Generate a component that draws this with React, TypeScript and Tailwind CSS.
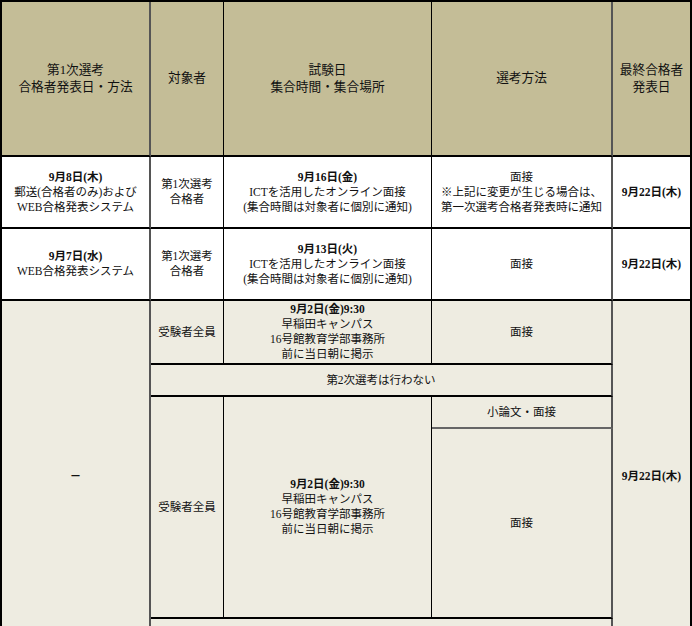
const font = {
  fontFamily: '"Liberation Serif", "Noto Sans CJK JP", serif',
};

function Cell({
  className = "",
  children,
}: {
  className?: string;
  children?: React.ReactNode;
}) {
  return (
    <div
      className={
        "flex flex-col items-center justify-center text-center text-[#111] " +
        className
      }
    >
      {children}
    </div>
  );
}

export default function App() {
  const head = "bg-[#c4bd97] border-b-2 border-b-black text-[12.7px] leading-[16.7px]";
  const body = "text-[11.5px] leading-[15px]";
  const rowLine = "border-b-2 border-b-black";

  return (
    <div className="min-h-screen bg-white" style={font}>
      <div className="grid w-[692px] grid-cols-[149px_73px_208px_181px_77px] grid-rows-[155px_72px_72px_64px_32px_32px_190px_32px] border-l-2 border-t-2 border-r-2 border-black">
        {/* header */}
        <Cell className={`${head} border-r-2 border-r-[#555]`}>
          <span>第1次選考</span>
          <span>合格者発表日・方法</span>
        </Cell>
        <Cell className={`${head} border-r border-r-black`}>
          <span>対象者</span>
        </Cell>
        <Cell className={`${head} border-r border-r-black`}>
          <span>試験日</span>
          <span>集合時間・集合場所</span>
        </Cell>
        <Cell className={`${head} border-r-2 border-r-[#555]`}>
          <span>選考方法</span>
        </Cell>
        <Cell className={head}>
          <span>最終合格者</span>
          <span>発表日</span>
        </Cell>

        {/* row 1 */}
        <Cell className={`${body} ${rowLine} bg-white border-r-2 border-r-[#555]`}>
          <span className="font-bold">9月8日(木)</span>
          <span>郵送(合格者のみ)および</span>
          <span>WEB合格発表システム</span>
        </Cell>
        <Cell className={`${body} ${rowLine} bg-white border-r border-r-black`}>
          <span>第1次選考</span>
          <span>合格者</span>
        </Cell>
        <Cell className={`${body} ${rowLine} bg-white border-r border-r-black`}>
          <span className="font-bold">9月16日(金)</span>
          <span>ICTを活用したオンライン面接</span>
          <span>(集合時間は対象者に個別に通知)</span>
        </Cell>
        <Cell className={`${body} ${rowLine} bg-white border-r-2 border-r-[#555]`}>
          <span>面接</span>
          <span>※上記に変更が生じる場合は、</span>
          <span>第一次選考合格者発表時に通知</span>
        </Cell>
        <Cell className={`${body} ${rowLine} bg-white`}>
          <span className="font-bold">9月22日(木)</span>
        </Cell>

        {/* row 2 */}
        <Cell className={`${body} ${rowLine} bg-white border-r-2 border-r-[#555]`}>
          <span className="font-bold">9月7日(水)</span>
          <span>WEB合格発表システム</span>
        </Cell>
        <Cell className={`${body} ${rowLine} bg-white border-r border-r-black`}>
          <span>第1次選考</span>
          <span>合格者</span>
        </Cell>
        <Cell className={`${body} ${rowLine} bg-white border-r border-r-black`}>
          <span className="font-bold">9月13日(火)</span>
          <span>ICTを活用したオンライン面接</span>
          <span>(集合時間は対象者に個別に通知)</span>
        </Cell>
        <Cell className={`${body} ${rowLine} bg-white border-r-2 border-r-[#555]`}>
          <span>面接</span>
        </Cell>
        <Cell className={`${body} ${rowLine} bg-white`}>
          <span className="font-bold">9月22日(木)</span>
        </Cell>

        {/* group with shared first / last column */}
        <Cell className={`${body} col-start-1 row-start-4 row-span-5 bg-[#eeece1] border-r-2 border-r-[#555]`}>
          <span className="font-bold">－</span>
        </Cell>

        <Cell className={`${body} col-start-2 row-start-4 bg-[#eeece1] ${rowLine} border-r border-r-black`}>
          <span>受験者全員</span>
        </Cell>
        <Cell className={`${body} col-start-3 row-start-4 bg-[#eeece1] ${rowLine} border-r border-r-black`}>
          <span className="font-bold">9月2日(金)9:30</span>
          <span>早稲田キャンパス</span>
          <span>16号館教育学部事務所</span>
          <span>前に当日朝に掲示</span>
        </Cell>
        <Cell className={`${body} col-start-4 row-start-4 bg-[#eeece1] ${rowLine} border-r-2 border-r-[#555]`}>
          <span>面接</span>
        </Cell>

        <Cell className={`${body} col-start-5 row-start-4 row-span-5 bg-[#eeece1]`}>
          <span className="font-bold">9月22日(木)</span>
        </Cell>

        <Cell className={`${body} col-start-2 col-span-3 row-start-5 bg-[#eeece1] ${rowLine} border-r-2 border-r-[#555]`}>
          <span>第2次選考は行わない</span>
        </Cell>

        <Cell className={`${body} col-start-2 row-start-6 row-span-2 bg-[#eeece1] ${rowLine} border-r border-r-black`}>
          <span>受験者全員</span>
        </Cell>
        <Cell className={`${body} col-start-3 row-start-6 row-span-2 bg-[#eeece1] ${rowLine} border-r border-r-black`}>
          <span className="font-bold">9月2日(金)9:30</span>
          <span>早稲田キャンパス</span>
          <span>16号館教育学部事務所</span>
          <span>前に当日朝に掲示</span>
        </Cell>
        <Cell className={`${body} col-start-4 row-start-6 bg-[#eeece1] border-b-2 border-b-[#666] border-r-2 border-r-[#555]`}>
          <span>小論文・面接</span>
        </Cell>
        <Cell className={`${body} col-start-4 row-start-7 bg-[#eeece1] ${rowLine} border-r-2 border-r-[#555]`}>
          <span>面接</span>
        </Cell>

        <Cell className={`${body} col-start-2 col-span-3 row-start-8 bg-[#eeece1] border-r-2 border-r-[#555]`} />
      </div>
    </div>
  );
}
